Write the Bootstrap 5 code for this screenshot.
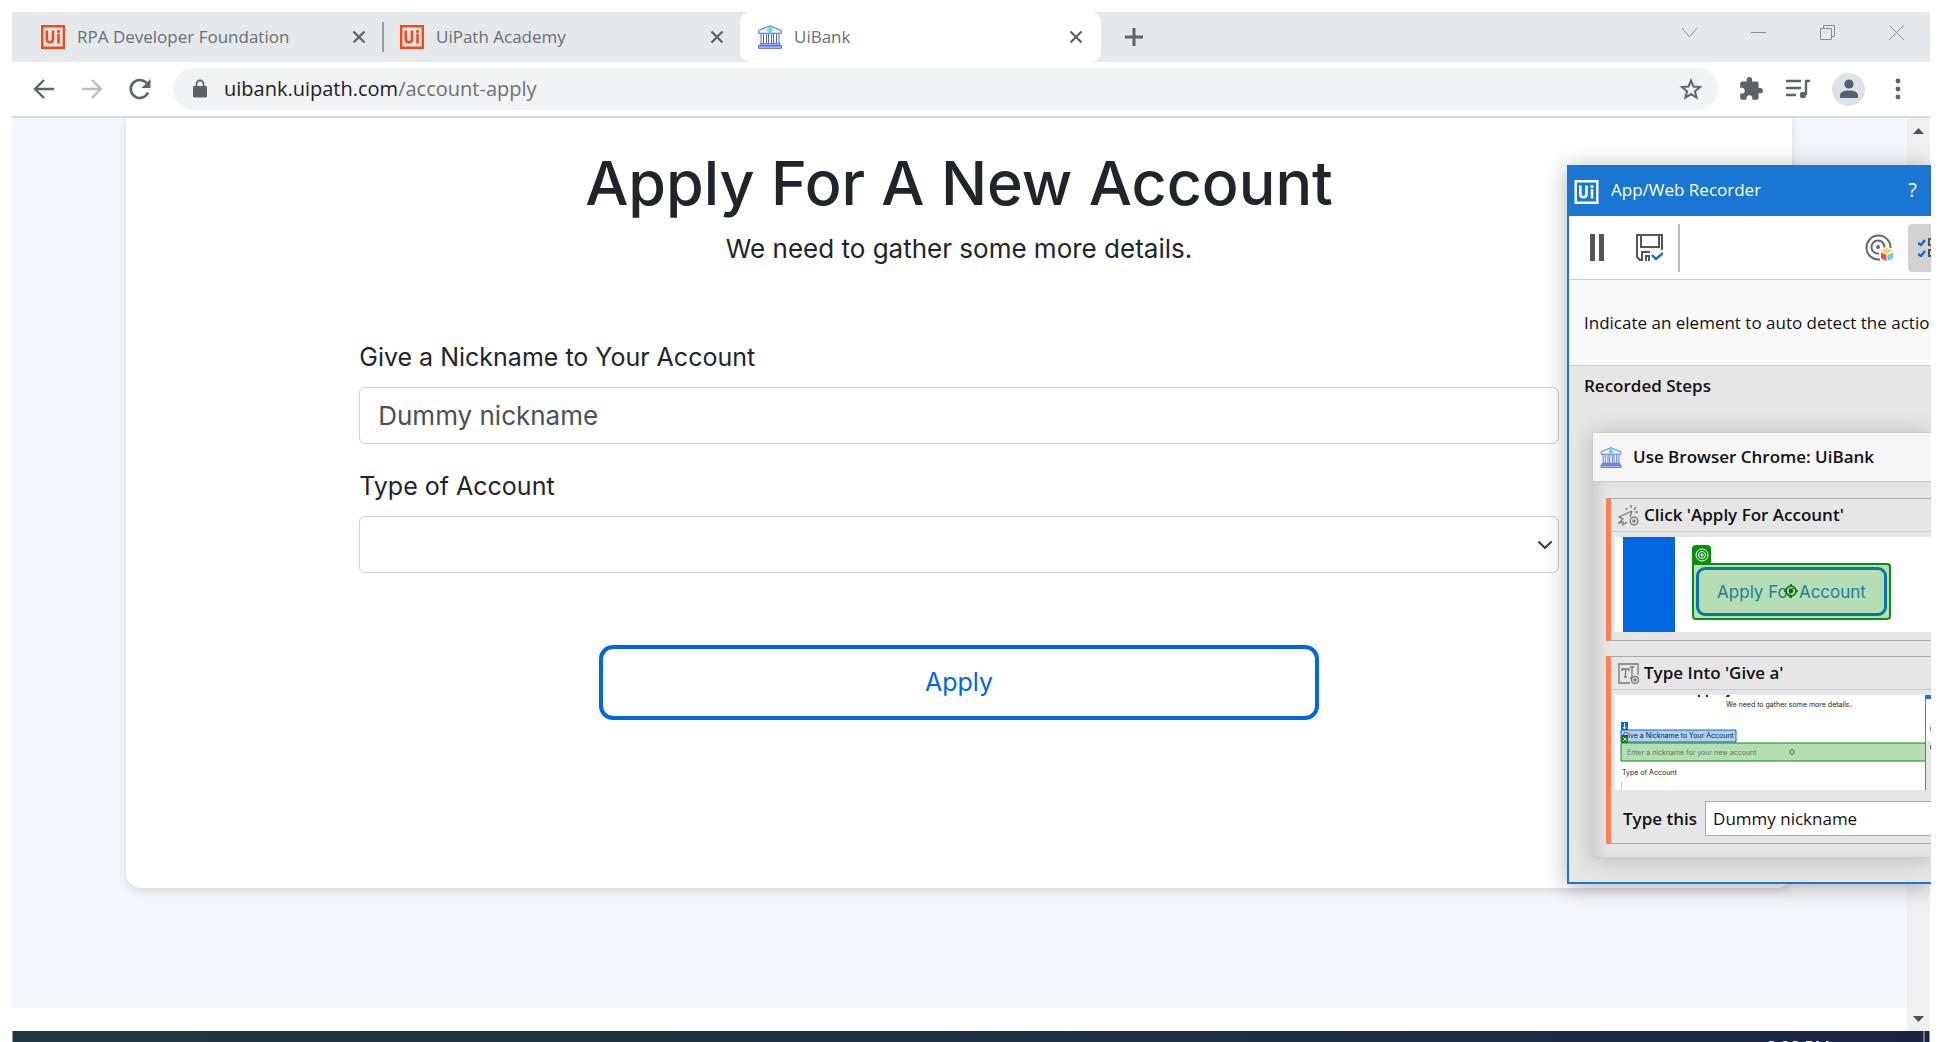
<!DOCTYPE html>
<html lang="en">
<head>
<meta charset="utf-8">
<meta name="viewport" content="width=device-width, initial-scale=1">
<title>UiBank</title>
<link href="https://cdn.jsdelivr.net/npm/bootstrap@5.3.0/dist/css/bootstrap.min.css" rel="stylesheet">
<style>
:root{--ui:"Open Sans","Noto Sans",sans-serif;--brand:"Inter","Open Sans",sans-serif}
body{background:#fff;font-family:var(--ui);overflow:hidden}
svg{display:block;flex:none}
.screen{height:100vh;padding:12px 11px 0 12px;position:relative}
.tabstrip{height:50px;background:#e5e9ec;margin-right:1px}
.chrome-tab{width:361px;height:50px;padding:0 18px;gap:12px;font-size:17px;color:#6a6e72}
.chrome-tab.first-tab{padding:0 16px 0 29px;width:370px}
.chrome-tab.second-tab{padding:0 16px;width:356px}
.chrome-tab.active-tab{background:#fff;border-radius:10px}
.tab-title{color:inherit;text-decoration:none;flex:1;white-space:nowrap}
.tab-sep{width:2px;height:30px;background:#9a9da0}
.bare{border:0;background:none;padding:0;display:flex;align-items:center;justify-content:center;color:#5f6368}
.wincontrols{gap:54px;padding-right:26px;color:#8c8f92;margin-top:-10px}
.wincontrols .bare{color:inherit}
.toolbar{height:54px;padding:0 12px 0 20px;margin-right:1px}
.navset{gap:24px}
.forward{color:#babcbe}
.urlpill{height:42px;border-radius:21px;background:#f1f3f4;margin:0 20px 0 21px;padding:0 15px 0 19px;gap:16px}
.url-box{flex:1;font-size:20px;line-height:42px;white-space:nowrap;color:#6d7176}
.url-box b{font-weight:400;color:#202124}
.avatar{width:33px;height:33px;border-radius:50%;background:#dee1e6;color:#535f76;overflow:hidden}
.extras{gap:21px}
.viewport{border-top:2px solid #dadbdc;flex:1;min-height:0;margin-right:1px}
.page-bg{background:#f5f6fb;padding:0 115px 120px 114px}
.sheet{background:#fff;border-radius:0 0 15px 15px;box-shadow:0 3px 8px rgba(0,0,0,.12);height:770px;font-family:var(--brand);color:#212529;padding-top:25px}
.sheet h1{font-size:61px;line-height:80px;font-weight:500;margin:0}
.sheet .sub{font-size:26px;line-height:36px;margin:8px 0 72px}
.form-zone{width:72%;margin:0 auto}
.form-zone label{font-size:25px;line-height:36px;margin-bottom:12px;display:block}
.form-zone .form-control,.form-zone .form-select{height:57px;font-size:26px;line-height:36px;border:1px solid #ced0da;border-radius:6px;padding:6px 18px;color:#495057;background-color:#fff}
.form-zone .form-select{background-position:right 5px center;background-size:16px 16px}
.apply-btn{width:60%;height:75px;border:4px solid #0067df;border-radius:14px;color:#0067df;background:#fff;font-size:25px;margin:72px auto 0;display:block}
.scroller{width:23px;background:#f0f0f0;padding:10px 0 9px}
.taskbar{height:11px;background:linear-gradient(90deg,#213740,#1b2c40 75%,#1a2544);border-left:1px solid #8a979b;border-right:1px solid #8a8fa0;margin-right:1px;overflow:hidden;color:#fff;font-size:17px;line-height:24px;padding:4px 4px 0 0}
.taskbar .clock{margin-right:93px;white-space:nowrap}
.taskbar .peek{width:2px;height:11px;background:#737b8f;margin-top:-4px}
.recorder{position:absolute;right:11px;top:165px;width:364px;height:719px;border:2px solid #1976d2;border-right:0;background:#e6e6e6;color:#111;font-size:17px;box-shadow:0 3px 22px rgba(0,0,0,.3);clip-path:inset(-30px 0 -30px -30px);overflow:hidden;white-space:nowrap}
.rec-head{height:49px;background:#1976d2;color:#fff;padding:0 14px 0 5px;gap:12px}
.rec-head span,.rec-head button{padding-bottom:3px}
.rec-tools{height:64px;background:#fff;border-bottom:1px solid #ccc;padding-left:20px}
.save-tool{margin-left:31px}
.target-tool{margin-right:15px}
.tool-sep{width:2px;height:48px;background:#bbb;margin-left:15px}
.tool-on{width:60px;height:48px;background:#d2d2d2;border-radius:4px 0 0 4px;justify-content:flex-start;padding-left:10px;margin-right:-37px}
.rec-hint{height:86px;background:#f9f9f9;border-bottom:1px solid #ccc;padding-left:15px;line-height:86px}
.semi{font-weight:600}
.rec-title{padding-left:15px;line-height:40px;margin:0}
.flow{margin:26px 0 0 23px;border:1px solid #ccc;border-right:0;box-shadow:0 2px 22px rgba(0,0,0,.2);background:#e6e6e6}
.flow-head{height:49px;background:#f6f6f6;border-bottom:1px solid #ccc;padding-left:7px;gap:11px}
.flow-body{padding:16px 0 13px 13px;box-shadow:inset 10px 0 14px -5px rgba(0,0,0,.12);height:375px}
.step{border-left:5px solid #ff8050;border-top:1px solid #aaa;border-bottom:1px solid #aaa}
.step-head{height:33px;border-bottom:1px solid #ccc;padding-left:7px;gap:5px}
.shot{margin:5px 0 0 4px;background:#fff;height:95px;overflow:hidden;position:relative}
.shot-a{padding-left:8px}
.blueblock{width:52px;background:#0067df;height:95px}
.grnbox{margin:26px 0 0 17px;width:199px;height:57px;border:2px solid #0a8f0a;border-radius:0 4px 4px 4px;background:#b5deb5;padding:2px;position:relative}
.grnbox span{display:flex;height:49px;border:3px solid #0876a8;border-radius:9px;align-items:center;justify-content:center;font:17px/20px var(--brand);color:#1b7f9b}
.tagmark{position:absolute;left:-2px;top:-20px;width:19px;height:20px;background:#0a8f0a;border-radius:4px 4px 0 0;display:flex;align-items:center;justify-content:center}
.hit{position:absolute;left:90px;top:19px}
.tiny{font:7px/10px var(--brand);color:#222;position:absolute}
.t-sub{left:111px;top:5px}
.t-nick{left:8px;top:36px}
.t-enter{left:12px;top:53px;color:#4d7f5c}
.t-type{left:7px;top:73px}
.type-row{padding:11px 0 7px 12px;gap:8px}
.type-row input{width:228px;height:35px;border:1px solid #aaa;border-right:0;background:#fff;border-radius:0;padding:0 7px;font-size:17px;color:#111;flex:none}
</style>
<script src="https://cdn.jsdelivr.net/npm/bootstrap@5.3.0/dist/js/bootstrap.bundle.min.js"></script>
</head>
<body>
<svg width="0" height="0" class="position-absolute" aria-hidden="true">
<symbol id="ui" viewBox="0 0 24 24"><path fill="none" stroke="currentColor" stroke-width="2.4" d="M1.2 1.2h21.6v21.6H1.2z"/><path fill="none" stroke="currentColor" stroke-width="2.6" d="M5.800 5.500v8.500q0 3.200 3.100 3.200t3.100-3.200V5.500M17.500 9V18.500"/><circle cx="17.500" cy="6.500" r="1.700" fill="currentColor"/></symbol>
<symbol id="bank" viewBox="0 0 24 24"><g fill="none" stroke="#4a68d8" stroke-width="1"><path fill="#eef2ff" d="M.7 5.500 12 .8l11.300 4.700v2.800H.7z"/><path d="M3 9v9.500M5.500 9v9.500M8.500 9v9.500M10.500 9v9.500M13.500 9v9.500M15.500 9v9.500M18.500 9v9.500M21 9v9.500"/><path fill="#b5c4f5" d="M2 18.700h20v2H2zM.6 20.700h22.800v2.600H.6z"/></g><circle cx="12" cy="5" r="3" fill="#7df0dc"/><path d="M12 2.500v5.500" stroke="#25c8b0"/></symbol>
<symbol id="x" viewBox="0 0 14 14"><path stroke="currentColor" stroke-width="2.200" d="m1.500 1.500 11 11m0-11-11 11"/></symbol>
</svg>
<div class="screen d-flex flex-column">
  <header class="tabstrip d-flex align-items-center flex-shrink-0">
    <div class="chrome-tab first-tab d-flex align-items-center"><svg width="24" height="24" color="#fa4616"><use href="#ui"/></svg><a class="tab-title" href="#">RPA Developer Foundation</a><button class="bare" aria-label="Close tab"><svg width="14" height="14"><use href="#x"/></svg></button></div>
    <div class="tab-sep"></div>
    <div class="chrome-tab second-tab d-flex align-items-center"><svg width="24" height="24" color="#fa4616"><use href="#ui"/></svg><a class="tab-title" href="#">UiPath Academy</a><button class="bare" aria-label="Close tab"><svg width="14" height="14"><use href="#x"/></svg></button></div>
    <div class="chrome-tab active-tab d-flex align-items-center"><svg width="24" height="24"><use href="#bank"/></svg><a class="tab-title" href="#">UiBank</a><button class="bare" aria-label="Close tab"><svg width="14" height="14"><use href="#x"/></svg></button></div>
    <button class="bare ms-4" aria-label="New tab"><svg width="18" height="18"><path d="M9 0v18M0 9h18" stroke="currentColor" stroke-width="3"/></svg></button>
    <div class="wincontrols d-flex align-items-center ms-auto">
      <button class="bare" aria-label="Tab search"><svg width="15" height="15" fill="none" stroke="currentColor"><path d="m0 3 7.500 9L15 3"/></svg></button>
      <button class="bare" aria-label="Minimize"><svg width="15" height="15" stroke="currentColor"><path d="M0 7.500h15"/></svg></button>
      <button class="bare" aria-label="Restore"><svg width="15" height="15" fill="none" stroke="currentColor"><path d="M.5 3.500h11v11H.5zM3.500 3.500v-3h11v11h-3"/></svg></button>
      <button class="bare" aria-label="Close"><svg width="15" height="15" stroke="currentColor"><path d="m0 0 15 15M15 0 0 15"/></svg></button>
    </div>
  </header>
  <nav class="toolbar d-flex align-items-center flex-shrink-0">
    <div class="navset d-flex">
      <button class="bare" aria-label="Back"><svg width="24" height="24" fill="none" stroke="currentColor" stroke-width="2.400"><path d="M22 12H3M12 3l-9 9 9 9"/></svg></button>
      <button class="bare forward" aria-label="Forward"><svg width="24" height="24" fill="none" stroke="currentColor" stroke-width="2.400"><path d="M2 12h19M12 3l9 9-9 9"/></svg></button>
      <button class="bare" aria-label="Reload"><svg width="24" height="24" fill="none" stroke="currentColor" stroke-width="2.600"><path d="M20 15.500a9 9 0 1 1-1.500-9.500"/><path fill="currentColor" stroke="none" d="M22.500 2v9h-9z"/></svg></button>
    </div>
    <div class="urlpill d-flex align-items-center flex-grow-1">
      <svg width="16" height="20" viewBox="0 0 16 20"><path fill="#5f6368" d="M2 7h12q1 0 1 1v9q0 1.500-1.500 1.500h-11Q1 18.500 1 17V8q0-1 1-1z"/><path fill="none" stroke="#5f6368" stroke-width="1.800" d="M4.500 8V5a3.500 3.500 0 0 1 7 0v3"/></svg>
      <div class="url-box"><b>uibank.uipath.com</b>/account-apply</div>
      <button class="bare" aria-label="Bookmark this tab"><svg width="24" height="24" viewBox="0 0 24 24"><path fill="none" stroke="currentColor" stroke-width="2" d="m12 3.600 2.500 6 6.500.5-5 4.200 1.600 6.300-5.600-3.400-5.600 3.400L8 14.300l-5-4.200 6.500-.5z"/></svg></button>
    </div>
    <div class="extras d-flex align-items-center">
      <button class="bare" aria-label="Extensions"><svg width="26" height="26" viewBox="0 0 24 24"><path fill="currentColor" d="M20.500 11H19V7a2 2 0 0 0-2-2h-4V3.500a2.500 2.500 0 0 0-5 0V5H4a2 2 0 0 0-2 2v3.800h1.500a2.700 2.700 0 0 1 0 5.400H2V20a2 2 0 0 0 2 2h3.800v-1.500a2.700 2.700 0 0 1 5.400 0V22H17a2 2 0 0 0 2-2v-4h1.500a2.500 2.500 0 0 0 0-5z"/></svg></button>
      <button class="bare" aria-label="Media controls"><svg width="26" height="24" fill="none" stroke="currentColor" stroke-width="2.400"><path d="M1 4h15M1 11h15M1 18h10M25 4h-4v14"/><circle cx="18" cy="18" r="3.200" fill="currentColor" stroke="none"/><path d="M18 15.500h3v3h-3z" fill="currentColor" stroke="none"/></svg></button>
      <button class="bare avatar" aria-label="Profile"><svg width="20" height="20" fill="currentColor"><circle cx="10" cy="5" r="4.600"/><path d="M1 19v-2.500q0-5 9-5t9 5V19z"/></svg></button>
      <button class="bare pe-2" aria-label="Menu"><svg width="24" height="24" fill="currentColor"><circle cx="12" cy="4" r="2.400"/><circle cx="12" cy="12" r="2.400"/><circle cx="12" cy="20" r="2.400"/></svg></button>
    </div>
  </nav>
  <div class="viewport d-flex">
    <main class="flex-grow-1">
      <div class="page-bg">
        <section class="sheet text-center">
          <h1>Apply For A New Account</h1>
          <p class="sub">We need to gather some more details.</p>
          <form class="form-zone text-start">
            <label for="nick">Give a Nickname to Your Account</label>
            <input id="nick" class="form-control" type="text" value="Dummy nickname">
            <label for="kind" class="mt-4">Type of Account</label>
            <select id="kind" class="form-select"><option></option></select>
            <button type="button" class="apply-btn">Apply</button>
          </form>
        </section>
      </div>
    </main>
    <div class="scroller d-flex flex-column justify-content-between align-items-center">
      <svg width="11" height="6"><path fill="#505050" d="M0 6 5.500 0 11 6z"/></svg>
      <svg width="11" height="6"><path fill="#505050" d="M0 0h11L5.500 6z"/></svg>
    </div>
  </div>
  <footer class="taskbar d-flex justify-content-end flex-shrink-0"><span class="clock">8:28 PM</span><span class="peek"></span></footer>
  <aside class="recorder">
    <div class="rec-head d-flex align-items-center"><svg width="25" height="24"><use href="#ui"/></svg><span class="flex-grow-1">App/Web Recorder</span><button class="bare text-white fs-5" aria-label="Help">?</button></div>
    <div class="rec-tools d-flex align-items-center">
      <button class="bare" aria-label="Pause"><svg width="16" height="27" fill="#555"><path d="M1 0h5v27H1zM10 0h5v27h-5z"/></svg></button>
      <button class="bare save-tool" aria-label="Save"><svg width="27" height="27" fill="none" stroke="#555" stroke-width="2"><path d="M26 16V1H1v22l3 3h2M5 1v12h18V1"/><path d="M6 27v-9h8M10 27v-5h3v5"/><path stroke="#0b6cf0" stroke-width="2.400" d="m16 21 4 4 7-6"/></svg></button>
      <div class="tool-sep"></div>
      <button class="bare ms-auto target-tool" aria-label="Target options"><svg width="28" height="28" fill="none" stroke="#666" stroke-width="2"><path d="M15 25.500A12 12 0 1 1 25.500 14"/><path d="M14 19.500a6.500 6.500 0 1 1 5.500-6"/><circle cx="13" cy="13" r="2" fill="#666" stroke="none"/><g stroke="none"><path fill="#f7d560" d="m16 17 6-3 6 3-6 3z"/><path fill="#f0522a" d="m16 18.500 5.500 2.500v6L16 24.500z"/><path fill="#6cc9f5" d="m28 18.500-5.500 2.500v6l5.500-2.500z"/></g></svg></button>
      <button class="bare tool-on" aria-label="Show steps"><svg width="28" height="20" fill="none" stroke="#555" stroke-width="2"><path stroke="#0b6cd0" stroke-width="2.400" d="m0 5 3 2 4-5M0 16l3 2 4-5"/><path d="M11 1h8v6h-8zM11 12h8v6h-8z"/></svg></button>
    </div>
    <div class="rec-hint">Indicate an element to auto detect the actio</div>
    <p class="rec-title semi">Recorded Steps</p>
    <div class="flow">
      <div class="flow-head semi d-flex align-items-center"><svg width="22" height="21"><use href="#bank"/></svg>Use Browser Chrome: UiBank</div>
      <div class="flow-body d-flex flex-column justify-content-between">
        <div class="step">
          <div class="step-head semi d-flex align-items-center"><svg width="21" height="21" fill="none" stroke="#777" stroke-width="1.300"><path d="m14 6-13 6 4 2-4 4 4-1v3l4-3M14 6l-2 6M8 3l1 2M13 0v3M18 2l-2 3M17 7h3"/><circle cx="16" cy="16" r="3.800"/><circle cx="16" cy="16" r="1"/></svg>Click 'Apply For Account'</div>
          <div class="shot shot-a d-flex"><div class="blueblock"></div><div class="grnbox"><i class="tagmark"><svg width="14" height="14" fill="none" stroke="#fff"><circle cx="7" cy="7" r="6"/><circle cx="7" cy="7" r="3.500"/><circle cx="7" cy="7" r="1.200"/></svg></i><span>Apply For Account</span><svg class="hit" width="14" height="14" fill="none" stroke="#0a6d0a" stroke-width="1.600"><circle cx="7" cy="7" r="5"/><circle cx="7" cy="7" r="1.500" fill="#0a6d0a"/><path d="M7 0v3M7 11v3M0 7h3M11 7h3"/></svg></div></div>
          <div class="pt-2"></div>
        </div>
        <div class="step">
          <div class="step-head semi d-flex align-items-center"><svg width="21" height="21" fill="none" stroke="#777" stroke-width="1.300"><path d="M12 20H1V1h19v11M4 8V6h7v2M7.500 6v8M6 14h3M12 4h4M14 4v11M12 15h2"/><circle cx="17" cy="17" r="3.500"/><circle cx="17" cy="17" r="1"/></svg>Type Into 'Give a'</div>
          <div class="shot">
            <svg class="w-100 position-absolute" height="95"><path fill="#222" d="M83 0h2v2h-2zM91 0h2v2h-2zM112 0h3l-1 2h-3z"/><path fill="#b0d0f5" stroke="#0067df" d="M6 35h115v12H6z"/><path fill="#0067df" d="M6 27h7v8H6z"/><path fill="#b5deb5" stroke="#0a8f0a" d="M6 48h310v18H6z"/><path fill="#0a8f0a" d="M6 40h7v8H6z"/><path stroke="#fff" d="M9.500 28v6M8 32l1.500 2 1.500-2M8 42l4 4m0-4-4 4"/><circle cx="177" cy="57" r="2.200" fill="none" stroke="#0a8f0a"/><path fill="#fff" d="M311 4h8v42h-8z"/><path fill="#e6e6e6" d="M311 46h8v49h-8z"/><path stroke="#777" d="M310.500 0v95"/><path fill="#1976d2" d="M310 0h10v4h-10z"/><path fill="#c98a50" d="M315 32h2v4h-2z"/><path fill="#a5572e" d="M315 50h2v4h-2z"/><path stroke="#ccc" d="M6.500 87v8"/></svg>
            <span class="tiny t-sub">We need to gather some more details.</span>
            <span class="tiny t-nick">Give a Nickname to Your Account</span>
            <span class="tiny t-enter">Enter a nickname for your new account</span>
            <span class="tiny t-type">Type of Account</span>
          </div>
          <div class="type-row d-flex align-items-center"><label class="semi" for="typed">Type this</label><input id="typed" value="Dummy nickname"></div>
        </div>
      </div>
    </div>
  </aside>
</div>
</body>
</html>
